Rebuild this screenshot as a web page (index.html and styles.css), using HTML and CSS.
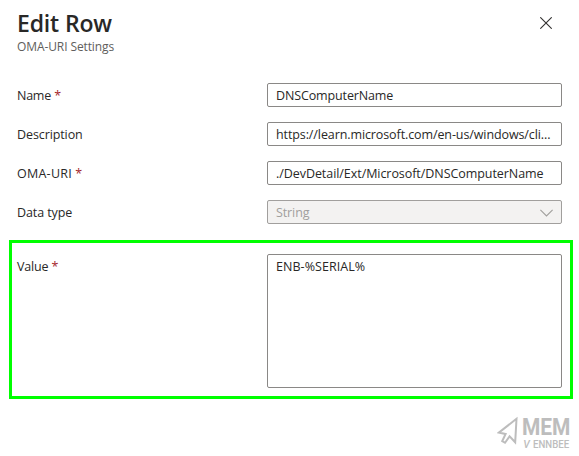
FILE: index.html
```
<!DOCTYPE html>
<html lang="en">
<head>
<meta charset="utf-8">
<title>Edit Row</title>
<link rel="stylesheet" href="styles.css">
</head>
<body>
<main class="panel">
  <header class="header">
    <div>
      <h1 class="title">Edit Row</h1>
      <p class="subtitle">OMA-URI Settings</p>
    </div>
    <svg class="close" width="12" height="12" viewBox="0 0 12 12"><path d="M.3.3l11.4 11.4M11.7.3L.3 11.7"/></svg>
  </header>
  <section class="form">
    <div class="row"><div class="label"><span class="t-name">Name</span> <b class="req">*</b></div><div class="field"><span class="t-dns">DNSComputerName</span></div></div>
    <div class="row"><div class="label"><span class="t-desc">Description</span></div><div class="field"><span class="t-url">https://learn.microsoft.com/en-us/windows/cli...</span></div></div>
    <div class="row"><div class="label"><span class="t-oma">OMA-URI</span> <b class="req">*</b></div><div class="field"><span class="t-path">./DevDetail/Ext/Microsoft/DNSComputerName</span></div></div>
    <div class="row"><div class="label"><span class="t-type">Data type</span></div><div class="field disabled"><span class="t-string">String</span><svg class="chevron" width="13" height="8" viewBox="0 0 13 8"><path d="M.4.8l6.1 6.1L12.6.8"/></svg></div></div>
  </section>
  <section class="highlight">
    <div class="label"><span class="t-value">Value</span> <b class="req">*</b></div>
    <div class="field area"><span class="t-enb">ENB-%SERIAL%</span></div>
  </section>
  <footer class="brand">
    <svg class="cursor" width="22" height="31" viewBox="0 0 22 31"><path d="M19.5 2.8L1.8 16.6l6.8 1.4-3.4 7.2 2.8 1.6 4.6-6.5 5.6 6z"/></svg>
    <div class="brand-text"><div class="mem">MEM</div><div class="sub"><i class="vee">V</i><span class="ennbee">ENNBEE</span></div></div>
  </footer>
</main>
</body>
</html>
```
FILE: styles.css
```
* { box-sizing: border-box; }
body { margin: 0; background: #fff; color: #292827; font: 12.5px/18px "Open Sans", "Noto Sans", sans-serif; }
.panel { width: 579px; height: 456px; overflow: hidden; }
.header { display: flex; justify-content: space-between; height: 83px; padding: 8px 27px 0 17px; }
.title { margin: 0; font-size: 23px; line-height: 30px; font-weight: 600; letter-spacing: -.15px; }
.subtitle { margin: 0; color: #605e5c; font-size: 12px; line-height: 18px; letter-spacing: -.1px; }
.close { margin-top: 9px; fill: none; stroke: #323130; stroke-width: 1.1; }
.form { display: grid; gap: 15px; padding: 0 17px; }
.row { display: grid; grid-template-columns: 250px 295px; height: 24px; align-items: center; }
.label { white-space: nowrap; }
.row .label { padding-top: 2px; }
.req { color: #a4262c; font-weight: 400; }
.field { display: flex; align-items: center; justify-content: space-between; height: 24px; padding: 2px 8px 0; border: 1px solid #8a8886; border-radius: 2px; white-space: nowrap; }
.t-name { letter-spacing: -.25px; }
.t-dns { letter-spacing: -.13px; }
.t-desc { letter-spacing: -.1px; }
.t-url { letter-spacing: -.1px; }
.t-oma { letter-spacing: .25px; }
.t-path { letter-spacing: -.06px; }
.t-type { letter-spacing: -.1px; }
.t-string { letter-spacing: -.1px; }
.t-value { letter-spacing: -.2px; }
.t-enb { letter-spacing: .05px; }
.disabled { color: #a19f9d; background: #f3f2f1; border-color: #a19f9d; }
.chevron { fill: none; stroke: #a19f9d; stroke-width: 1.1; }
.highlight { display: grid; grid-template-columns: 250px 295px; width: 564px; height: 159px; margin: 16px 0 0 9px; padding: 11px 5px; border: 3px solid #00ff00; }
.highlight .label { padding-top: 4px; }
.area { height: 134px; align-items: flex-start; padding-top: 3px; }
.brand { display: flex; gap: 4px; padding: 17px 0 0 497px; color: #bdbdbd; }
.cursor { fill: none; stroke: #bdbdbd; stroke-width: 2; }
.brand-text { width: 48px; font-family: Roboto, sans-serif; font-weight: 700; }
.mem { width: 54px; margin: 0 0 0 -1px; font-size: 23px; line-height: 23px; transform: scaleX(.91); transform-origin: left; }
.sub { display: flex; gap: 3px; margin-top: 1px; font-size: 11.5px; line-height: 9px; }
.vee { width: 8px; font-weight: 500; transform: scaleX(.9); }
.ennbee { font-weight: 500; transform: scaleX(.84); transform-origin: left; }
```
